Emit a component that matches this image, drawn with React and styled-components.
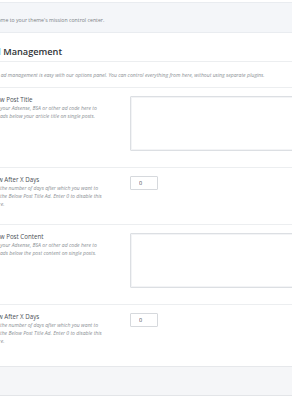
import React from "react";
import styled, { createGlobalStyle } from "styled-components";

const Global = createGlobalStyle`
  html, body { margin: 0; padding: 0; background: #fff; overflow: hidden; }
  body { font-family: "Open Sans", "Liberation Sans", sans-serif; width: 292px; height: 400px; }
`;

const Page = styled.div`
  margin-left: -13px;
  width: 360px;
  padding-top: 2px;
`;

const TopBand = styled.div`
  box-sizing: border-box;
  height: 31px;
  padding-top: 13px;
  background: #f4f6f9;
  border-top: 1px solid #e9ecf0;
  border-bottom: 1px solid #e9ecf0;
  font-size: 5.2px;
  line-height: 8px;
  color: #7a7f86;
  margin-left: -1px;
`;

const Panel = styled.div`
  background: #fff;
`;

const Heading = styled.h2`
  margin: 0;
  padding: 12px 0 3px 2px;
  font-size: 9.2px;
  line-height: 13px;
  font-weight: 600;
  color: #2f3337;
  border-bottom: 1px solid #eceef0;
`;

const Intro = styled.p`
  margin: 0;
  height: 25px;
  display: flex;
  align-items: center;
  font-size: 5.1px;
  font-style: italic;
  color: #8a8f94;
  border-bottom: 1px solid #eceef0;
  padding-left: 2px;
`;

const Row = styled.div`
  display: grid;
  grid-template-columns: 143px 1fr;
  padding: 8px 0 16px;
  border-bottom: ${(p) => (p.$last ? "none" : "1px solid #eceef0")};
`;

const Info = styled.div`
  width: 120px;
`;

const Label = styled.div`
  font-size: 6.2px;
  line-height: 8px;
  color: #4a4f55;
`;

const Desc = styled.div`
  font-size: 5.1px;
  line-height: 8px;
  font-style: italic;
  color: #8a8f94;
`;

const TextArea = styled.textarea`
  display: block;
  box-sizing: border-box;
  width: 200px;
  height: 55px;
  margin: 0;
  border: 1px solid #dcdfe3;
  box-shadow: inset 0 0 0 1px #f3f4f6;
  border-radius: 1px;
  resize: none;
  background: #fff;
`;

const NumInput = styled.input`
  display: block;
  box-sizing: border-box;
  width: 28px;
  height: 14px;
  margin: 0;
  padding: 0 0 0 8px;
  border: 1px solid #d6d9dd;
  border-radius: 1px;
  font-family: "Open Sans", "Liberation Sans", sans-serif;
  font-size: 5.5px;
  color: #444;
  background: #fff;
`;

const Footer = styled.div`
  height: 28px;
  background: #f5f6f8;
  border-top: 1px solid #e6e8eb;
  border-bottom: 1px solid #e3e5e8;
  margin-top: 5px;
`;

const rows = [
  {
    label: "Below Post Title",
    desc: "Place your Adsense, BSA or other ad code here to show ads below your article title on single posts.",
    kind: "area",
  },
  {
    label: "Show After X Days",
    desc: "Enter the number of days after which you want to show the Below Post Title Ad. Enter 0 to disable this feature.",
    kind: "num",
  },
  {
    label: "Below Post Content",
    desc: "Place your Adsense, BSA or other ad code here to show ads below the post content on single posts.",
    kind: "area",
  },
  {
    label: "Show After X Days",
    desc: "Enter the number of days after which you want to show the Below Post Title Ad. Enter 0 to disable this feature.",
    kind: "num",
  },
];

export default function App() {
  return (
    <>
      <Global />
      <Page>
        <TopBand>Welcome to your theme's mission control center.</TopBand>
        <Panel>
          <Heading>Ad Management</Heading>
          <Intro>
            Your ad management is easy with our options panel. You can control everything from here, without using separate plugins.
          </Intro>
          {rows.map((r, i) => (
            <Row key={i} $last={i === rows.length - 1}>
              <Info>
                <Label>{r.label}</Label>
                <Desc>{r.desc}</Desc>
              </Info>
              <div>
                {r.kind === "area" ? <TextArea /> : <NumInput defaultValue="0" />}
              </div>
            </Row>
          ))}
        </Panel>
        <Footer />
      </Page>
    </>
  );
}
